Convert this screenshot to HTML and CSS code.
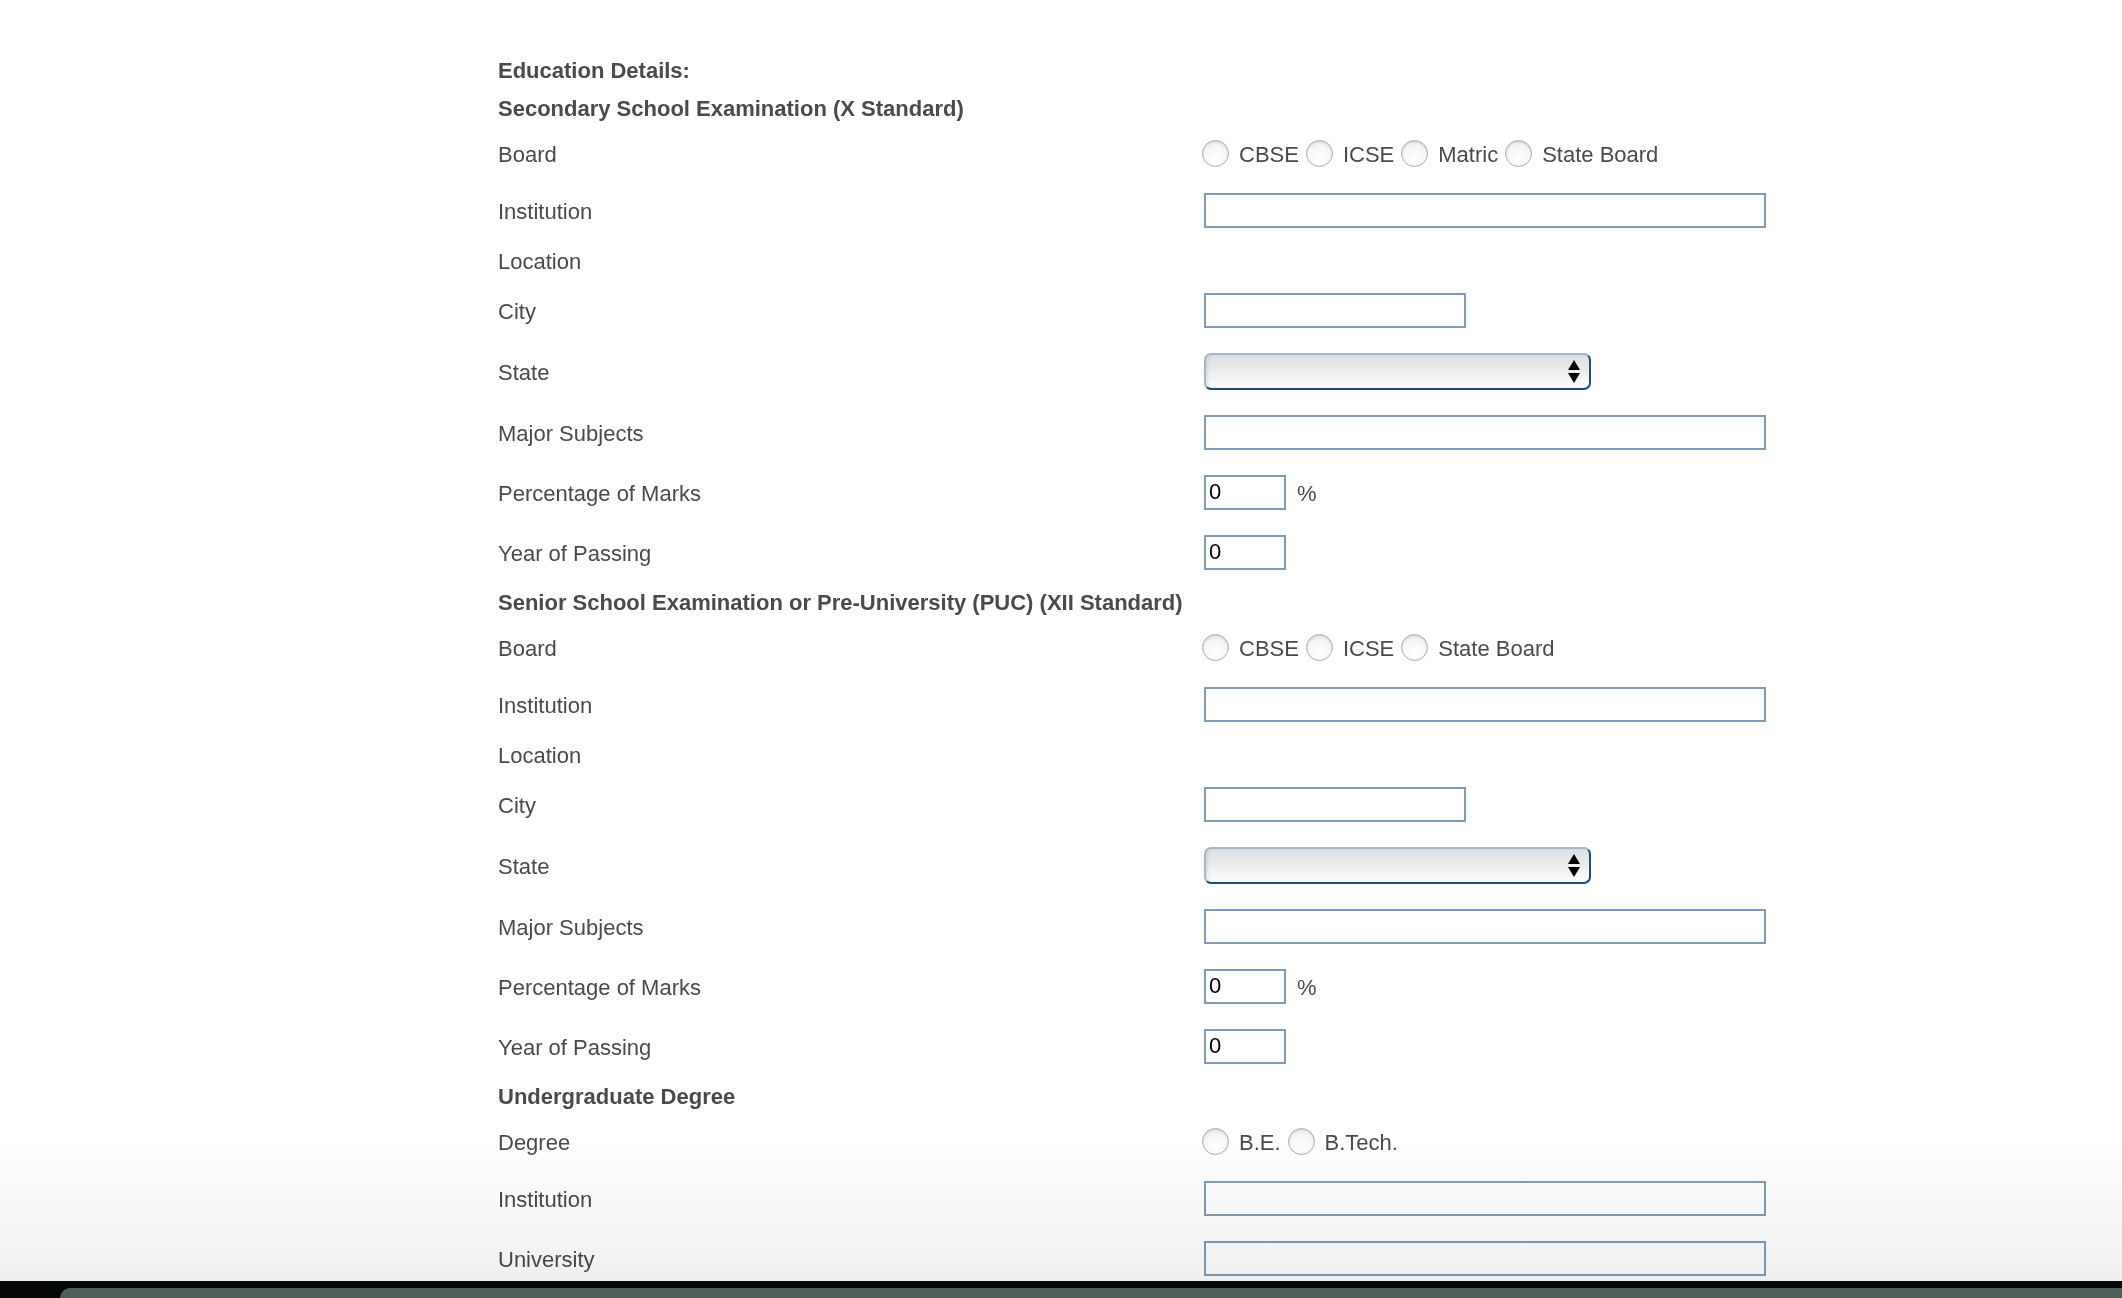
FILE: index.html
```html
<!DOCTYPE html>
<html lang="en">
<head>
<meta charset="utf-8">
<title>Education Details</title>
<link rel="stylesheet" href="styles.css">
</head>
<body>
<form class="form">
  <div class="row heading"><span>Education Details:</span></div>

  <div class="row heading"><span>Secondary School Examination (X Standard)</span></div>
  <div class="row radio-row"><span class="label">Board</span>
    <div class="ctrl radios">
      <input type="radio" name="b10"><span class="opt">CBSE</span>
      <input type="radio" name="b10"><span class="opt">ICSE</span>
      <input type="radio" name="b10"><span class="opt">Matric</span>
      <input type="radio" name="b10"><span class="opt">State Board</span>
    </div>
  </div>
  <div class="row input-row"><span class="label">Institution</span><div class="ctrl"><input class="txt wide" type="text"></div></div>
  <div class="row text-row"><span class="label">Location</span></div>
  <div class="row input-row"><span class="label">City</span><div class="ctrl"><input class="txt city" type="text"></div></div>
  <div class="row select-row"><span class="label">State</span><div class="ctrl"><div class="select"><span class="arrows"><i class="up"></i><i class="down"></i></span></div></div></div>
  <div class="row input-row"><span class="label">Major Subjects</span><div class="ctrl"><input class="txt wide" type="text"></div></div>
  <div class="row input-row"><span class="label">Percentage of Marks</span><div class="ctrl"><input class="txt small" type="text" value="0"><span class="unit">%</span></div></div>
  <div class="row input-row"><span class="label">Year of Passing</span><div class="ctrl"><input class="txt small" type="text" value="0"></div></div>

  <div class="row heading"><span>Senior School Examination or Pre-University (PUC) (XII Standard)</span></div>
  <div class="row radio-row"><span class="label">Board</span>
    <div class="ctrl radios">
      <input type="radio" name="b12"><span class="opt">CBSE</span>
      <input type="radio" name="b12"><span class="opt">ICSE</span>
      <input type="radio" name="b12"><span class="opt">State Board</span>
    </div>
  </div>
  <div class="row input-row"><span class="label">Institution</span><div class="ctrl"><input class="txt wide" type="text"></div></div>
  <div class="row text-row"><span class="label">Location</span></div>
  <div class="row input-row"><span class="label">City</span><div class="ctrl"><input class="txt city" type="text"></div></div>
  <div class="row select-row"><span class="label">State</span><div class="ctrl"><div class="select"><span class="arrows"><i class="up"></i><i class="down"></i></span></div></div></div>
  <div class="row input-row"><span class="label">Major Subjects</span><div class="ctrl"><input class="txt wide" type="text"></div></div>
  <div class="row input-row"><span class="label">Percentage of Marks</span><div class="ctrl"><input class="txt small" type="text" value="0"><span class="unit">%</span></div></div>
  <div class="row input-row"><span class="label">Year of Passing</span><div class="ctrl"><input class="txt small" type="text" value="0"></div></div>

  <div class="row heading"><span>Undergraduate Degree</span></div>
  <div class="row radio-row"><span class="label">Degree</span>
    <div class="ctrl radios">
      <input type="radio" name="deg"><span class="opt">B.E.</span>
      <input type="radio" name="deg"><span class="opt">B.Tech.</span>
    </div>
  </div>
  <div class="row input-row"><span class="label">Institution</span><div class="ctrl"><input class="txt wide" type="text"></div></div>
  <div class="row input-row"><span class="label">University</span><div class="ctrl"><input class="txt wide" type="text"></div></div>
</form>
<div class="fade"></div>
<div class="dock"><div class="dock-bar"></div></div>
</body>
</html>
```

FILE: styles.css
```css
html, body {
  margin: 0;
  padding: 0;
}
body {
  width: 2122px;
  height: 1298px;
  overflow: hidden;
  background: #fff;
  font-family: "Liberation Sans", Arial, Helvetica, sans-serif;
  font-size: 22px;
  color: #4a4a4a;
  position: relative;
}
.form {
  margin: 0 0 0 498px;
  padding-top: 50px;
  width: 1300px;
}
.row {
  display: grid;
  grid-template-columns: 706px 1fr;
  align-items: center;
}
.heading {
  height: 38px;
  font-weight: bold;
  grid-template-columns: 1fr;
}
.heading span,
.label,
.opt,
.unit {
  padding-top: 3px;
}
.radio-row { height: 54px; }
.input-row { height: 60px; }
.text-row { height: 40px; }
.select-row { height: 62px; }

.ctrl {
  display: flex;
  align-items: center;
}
.radios {
  margin-left: -2px;
}
.radios input {
  -webkit-appearance: none;
  appearance: none;
  width: 27px;
  height: 27px;
  margin: 0 10px 0 0;
  border-radius: 50%;
  border: 1px solid #adadad;
  background: radial-gradient(circle at 50% 70%, #ffffff 0%, #f6f6f6 55%, #e2e2e2 100%);
  box-shadow: inset 0 1px 2px rgba(0,0,0,0.12);
  box-sizing: border-box;
}
.opt {
  margin-right: 7px;
}
.txt {
  box-sizing: border-box;
  height: 35px;
  border: 2px solid #7f9db9;
  margin: 0;
  padding: 0 3px;
  font-family: "Liberation Sans", Arial, sans-serif;
  font-size: 22px;
  color: #000;
  background: #fff;
  outline: none;
}
.wide { width: 562px; }
.city { width: 262px; }
.small { width: 82px; }
.unit {
  margin-left: 11px;
}
.select {
  box-sizing: border-box;
  width: 387px;
  height: 37px;
  border-radius: 7px;
  border: 2px solid #1e4d7c;
  border-top-color: #a3b8cb;
  border-left-color: #a3b8cb;
  background: linear-gradient(#dedede 0%, #e9e9e9 40%, #f7f7f7 80%, #fdfdfd 100%);
  box-shadow: inset 3px 0 4px -2px rgba(0,0,0,0.12);
  display: flex;
  align-items: center;
  justify-content: flex-end;
  padding-right: 9px;
}
.arrows {
  display: flex;
  flex-direction: column;
  gap: 3px;
}
.arrows i {
  display: block;
  width: 0;
  height: 0;
  border-left: 6px solid transparent;
  border-right: 6px solid transparent;
}
.arrows .up { border-bottom: 10px solid #000; }
.arrows .down { border-top: 10px solid #000; }

.fade {
  position: absolute;
  left: 0;
  right: 0;
  top: 1140px;
  height: 141px;
  background: linear-gradient(#ffffff, #efefef);
  mix-blend-mode: multiply;
  pointer-events: none;
}
.dock {
  position: absolute;
  left: 0;
  right: 0;
  top: 1281px;
  bottom: 0;
  background: #060807;
}
.dock-bar {
  position: absolute;
  left: 60px;
  right: 0;
  top: 7px;
  bottom: 0;
  background: #525e5b;
  border-top-left-radius: 14px;
}
```
